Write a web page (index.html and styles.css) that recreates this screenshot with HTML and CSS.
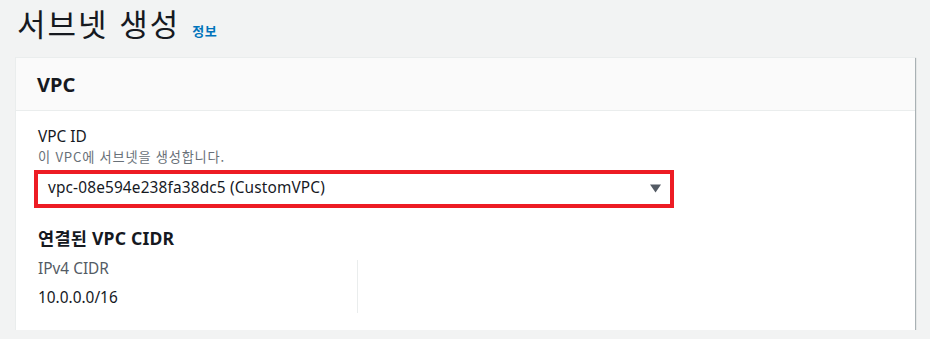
FILE: index.html
```html
<!DOCTYPE html>
<html lang="ko">
<head>
<meta charset="utf-8">
<link rel="stylesheet" href="styles.css">
</head>
<body>
<div class="page">
  <div class="title-row">
    <h1 class="title">서브넷 생성</h1>
    <a class="info">정보</a>
  </div>
  <div class="card">
    <div class="card-header">VPC</div>
    <div class="card-body">
      <div class="label">VPC ID</div>
      <div class="desc">이 VPC에 서브넷을 생성합니다.</div>
      <div class="select">
        <span class="select-text">vpc-08e594e238fa38dc5 (CustomVPC)</span>
        <svg class="caret" width="11" height="9" viewBox="0 0 11 9"><path d="M0 0.5 L11 0.5 L5.5 8.5 Z" fill="#545b64"/></svg>
      </div>
      <div class="sub-title">연결된 VPC CIDR</div>
      <div class="cols">
        <div class="col">
          <div class="key">IPv4 CIDR</div>
          <div class="val">10.0.0.0/16</div>
        </div>
        <div class="col col-empty"></div>
      </div>
    </div>
  </div>
</div>
</body>
</html>
```
FILE: styles.css
```css
html, body {
  margin: 0;
  background: #f2f3f3;
  font-family: "Noto Sans", "Noto Sans CJK KR", sans-serif;
  color: #16191f;
}
.page {
  padding: 0 15px;
}
.title-row {
  display: flex;
  align-items: baseline;
  height: 57px;
}
.title {
  margin: 0;
  padding-left: 2px;
  font-family: "Noto Sans CJK KR", sans-serif;
  font-size: 31px;
  letter-spacing: 2px;
  font-weight: 400;
  line-height: 45px;
  color: #16191f;
}
.info {
  margin-left: 12px;
  font-family: "Noto Sans CJK KR", sans-serif;
  font-size: 13px;
  letter-spacing: 0.5px;
  font-weight: 700;
  color: #0073bb;
}
.card {
  box-sizing: border-box;
  width: 900px;
  background: #fff;
  border-top: 1px solid #eaeded;
  border-left: 1px solid #eaeded;
  box-shadow: 1px 1px 1px 0 rgba(0, 28, 36, 0.3);
}
.card-header {
  height: 53px;
  box-sizing: border-box;
  background: #fafafa;
  border-bottom: 1px solid #eaeded;
  padding: 0 21px;
  display: flex;
  align-items: center;
  font-size: 20px;
  font-weight: 700;
}
.card-body {
  padding: 15px 22px 17px;
}
.label {
  font-size: 15.4px;
  line-height: 22px;
}
.desc {
  font-family: "Noto Sans CJK KR", sans-serif;
  font-size: 13.2px;
  letter-spacing: 0.8px;
  line-height: 16px;
  color: #687078;
  margin-top: 1px;
}
.select {
  box-sizing: border-box;
  margin-top: 5px;
  margin-left: -4px;
  width: 640px;
  height: 38px;
  border: 4px solid #ed1c24;
  display: flex;
  align-items: center;
  justify-content: space-between;
  padding: 0 9px 2px 10px;
}
.select-text {
  font-size: 15.4px;
  letter-spacing: 0.15px;
  line-height: 22px;
}
.caret {
  display: block;
}
.sub-title {
  margin-top: 18px;
  font-size: 17.6px;
  letter-spacing: 0.2px;
  font-weight: 700;
  line-height: 24px;
}
.cols {
  display: flex;
  margin-top: 10px;
}
.col {
  width: 319px;
  height: 53px;
}
.col-empty {
  border-left: 1px solid #eaeded;
}
.key {
  font-size: 15.4px;
  line-height: 20px;
  color: #545b64;
  margin-top: -1px;
}
.val {
  margin-top: 9px;
  font-size: 15.4px;
  line-height: 20px;
}
```
